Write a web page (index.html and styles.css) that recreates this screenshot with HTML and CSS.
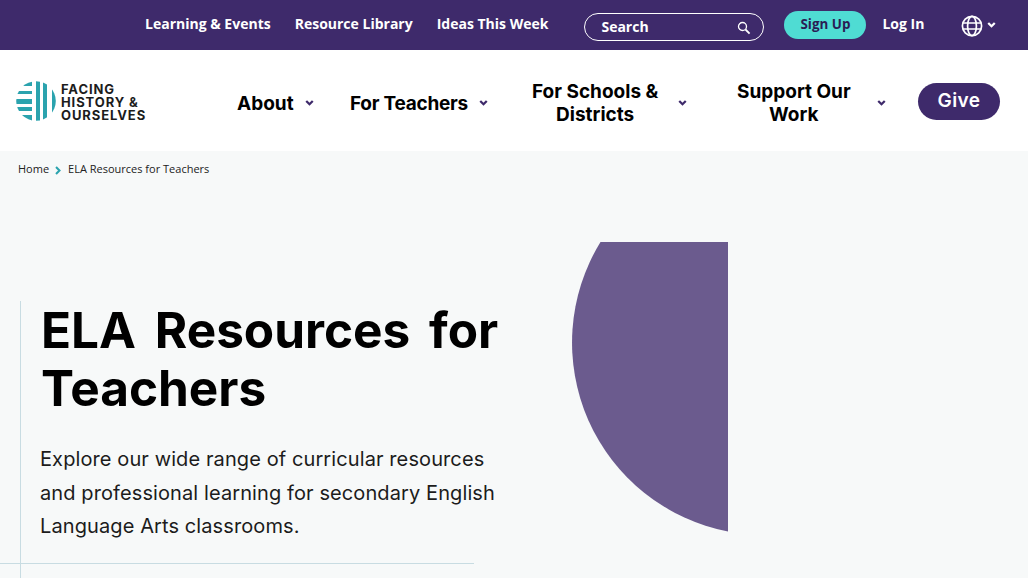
FILE: index.html
```html
<!DOCTYPE html>
<html lang="en">
<head>
    <meta charset="UTF-8">
    <meta name="viewport" content="width=device-width, initial-scale=1.0">
    <title>ELA Resources for Teachers</title>
    <link rel="stylesheet" href="styles.css">
</head>
<body>
    <div class="topbar">
        <nav class="top-links">
            <a href="#">Learning &amp; Events</a>
            <a href="#">Resource Library</a>
            <a href="#">Ideas This Week</a>
        </nav>
        <div class="search-box">
            <span>Search</span>
            <svg class="search-icon" viewBox="0 0 14 14" width="14" height="14">
                <circle cx="5.5" cy="5.5" r="4" fill="none" stroke="#fff" stroke-width="1.3"/>
                <path d="M8.5 8.5L12.6 12.6" stroke="#fff" stroke-width="1.8"/>
            </svg>
        </div>
        <a class="signup" href="#">Sign Up</a>
        <a class="login" href="#">Log In</a>
        <div class="lang">
            <svg viewBox="0 0 22 22" width="22" height="22" fill="none" stroke="#fff" stroke-width="1.7">
                <circle cx="11" cy="11" r="9.6"/>
                <ellipse cx="11" cy="11" rx="4.4" ry="9.6"/>
                <path d="M1.8 8H20.2M1.8 14H20.2"/>
            </svg>
            <svg class="chev" viewBox="0 0 10 7" width="9" height="6">
                <path d="M1.2 1.2L5 5L8.8 1.2" fill="none" stroke="#fff" stroke-width="2.6"/>
            </svg>
        </div>
    </div>

    <header class="mainbar">
        <a class="logo" href="#">
            <svg viewBox="0 0 40 40" width="40" height="40">
                <defs>
                    <clipPath id="logoClip"><circle cx="20" cy="20" r="19.8"/></clipPath>
                </defs>
                <g clip-path="url(#logoClip)" fill="#2ba3ae">
                    <rect x="0" y="0" width="16" height="5"/>
                    <rect x="0" y="10" width="16" height="3"/>
                    <rect x="0" y="18" width="16" height="5"/>
                    <rect x="0" y="26" width="16" height="4"/>
                    <rect x="0" y="34" width="16" height="6"/>
                    <rect x="20" y="0" width="4" height="40"/>
                    <rect x="27" y="0" width="4" height="40"/>
                    <rect x="36" y="0" width="4" height="40"/>
                </g>
            </svg>
            <span class="logo-text">FACING<br>HISTORY &amp;<br>OURSELVES</span>
        </a>
        <nav class="main-nav">
            <a class="nav-item nav-about" href="#"><span>About</span><svg class="nav-chev" viewBox="0 0 10 7" width="9" height="6"><path d="M1.2 1.2L5 5L8.8 1.2"/></svg></a>
            <a class="nav-item nav-teachers" href="#"><span>For Teachers</span><svg class="nav-chev" viewBox="0 0 10 7" width="9" height="6"><path d="M1.2 1.2L5 5L8.8 1.2"/></svg></a>
            <a class="nav-item nav-schools" href="#"><span>For Schools &amp;<br>Districts</span><svg class="nav-chev" viewBox="0 0 10 7" width="9" height="6"><path d="M1.2 1.2L5 5L8.8 1.2"/></svg></a>
            <a class="nav-item nav-support" href="#"><span>Support Our<br>Work</span><svg class="nav-chev" viewBox="0 0 10 7" width="9" height="6"><path d="M1.2 1.2L5 5L8.8 1.2"/></svg></a>
        </nav>
        <a class="give" href="#">Give</a>
    </header>

    <div class="breadcrumb">
        <a href="#">Home</a>
        <svg viewBox="0 0 7 10" width="6" height="9"><path d="M1.2 1L5.2 5L1.2 9" fill="none" stroke="#2ba3ae" stroke-width="2.4"/></svg>
        <span>ELA Resources for Teachers</span>
    </div>

    <main class="hero">
        <div class="hero-text">
            <h1>ELA Resources for Teachers</h1>
            <p>Explore our wide range of curricular resources and professional learning for secondary English Language Arts classrooms.</p>
            <div class="hero-rule"></div>
        </div>
        <svg class="hero-shape" viewBox="0 0 156 290" width="156" height="290">
            <path d="M28.5 0H156V289.5A192.3 192.3 0 0 1 28.5 0Z" fill="#6b5b8e"/>
        </svg>
    </main>
</body>
</html>
```

FILE: styles.css
```css
* {
    box-sizing: border-box;
}
html, body {
    height: 578px;
    overflow: hidden;
}
body {
    margin: 0;
    background-color: #f7f9f9;
    color: #000;
    font-family: Inter, "Liberation Sans", sans-serif;
}
a {
    color: inherit;
    text-decoration: none;
}
.topbar {
    display: flex;
    align-items: center;
    height: 50px;
    padding-left: 145px;
    background-color: #3e2a6b;
    color: #fff;
    font-family: "Open Sans", sans-serif;
    font-size: 14px;
    font-weight: 700;
}
.top-links {
    display: flex;
    gap: 24px;
    margin-top: -4px;
}
.search-box {
    display: flex;
    align-items: center;
    justify-content: space-between;
    width: 180px;
    height: 28px;
    margin-left: 36px;
    margin-top: 4px;
    padding: 0 12px 0 16px;
    border: 1px solid #fff;
    border-radius: 14px;
}
.search-box span {
    margin-top: -2px;
}
.search-icon {
    margin-top: 1px;
}
.signup {
    width: 82px;
    height: 28px;
    margin-left: 20px;
    border-radius: 14px;
    background-color: #4fdcd3;
    color: #2a1c55;
    font-size: 13.4px;
    line-height: 26px;
    text-align: center;
}
.login {
    margin-left: 16px;
    margin-top: -4px;
}
.lang {
    display: flex;
    align-items: center;
    gap: 4px;
    margin-left: 37px;
    margin-top: 1px;
}
.lang .chev {
    margin-top: -2px;
}
.mainbar {
    display: flex;
    align-items: center;
    height: 101px;
    padding-left: 16px;
    background-color: #fff;
}
.logo {
    display: flex;
    align-items: center;
    gap: 5px;
    width: 221px;
}
.logo-text {
    margin-top: 3px;
    color: #1c1c1c;
    font-size: 13px;
    font-weight: 700;
    line-height: 13px;
    letter-spacing: 0.9px;
}
.main-nav {
    display: flex;
    align-items: center;
    margin-top: 4px;
}
.nav-item {
    display: flex;
    align-items: center;
    font-size: 19px;
    font-weight: 700;
    line-height: 23px;
    text-align: center;
}
.nav-about { width: 113px; }
.nav-teachers { width: 182px; letter-spacing: -0.25px; }
.nav-schools { width: 205px; }
.nav-support { width: 150px; }
.nav-chev {
    margin-left: 11px;
    fill: none;
    stroke: #3e2a6b;
    stroke-width: 2.6;
}
.nav-about span, .nav-teachers span {
    margin-top: 1px;
}
.nav-schools .nav-chev {
    margin-left: 20px;
}
.nav-support .nav-chev {
    margin-left: 26px;
}
.give {
    width: 82px;
    height: 37px;
    margin-left: 31px;
    margin-top: 2px;
    border-radius: 19px;
    background-color: #3e2a6b;
    color: #fff;
    font-size: 19px;
    font-weight: 600;
    line-height: 35px;
    letter-spacing: 0.4px;
    text-align: center;
}
.breadcrumb {
    display: flex;
    align-items: center;
    gap: 6px;
    padding: 10px 18px 0;
    color: #222;
    font-family: "Open Sans", sans-serif;
    font-size: 11px;
    line-height: 15px;
}
.breadcrumb svg {
    margin: 3px 1px 0 0;
}
.hero {
    display: flex;
    align-items: flex-start;
    padding-left: 20px;
}
.hero-text {
    width: 500px;
    margin-top: 125px;
    padding-left: 20px;
    padding-bottom: 20px;
    border-left: 1px solid #c8dce2;
}
h1 {
    margin: 0;
    font-size: 49.5px;
    font-weight: 700;
    line-height: 58px;
    word-spacing: 7px;
}
.hero-text p {
    width: 470px;
    margin: 26px 0 0 -1px;
    color: #1c1c1c;
    font-size: 20px;
    line-height: 33.5px;
    letter-spacing: 0.1px;
}
.hero-rule {
    width: 474px;
    height: 1px;
    margin: 19px 0 0 -41px;
    background-color: #c8dce2;
}
.hero-shape {
    flex: none;
    margin-top: 66px;
    margin-left: 52px;
}
```
